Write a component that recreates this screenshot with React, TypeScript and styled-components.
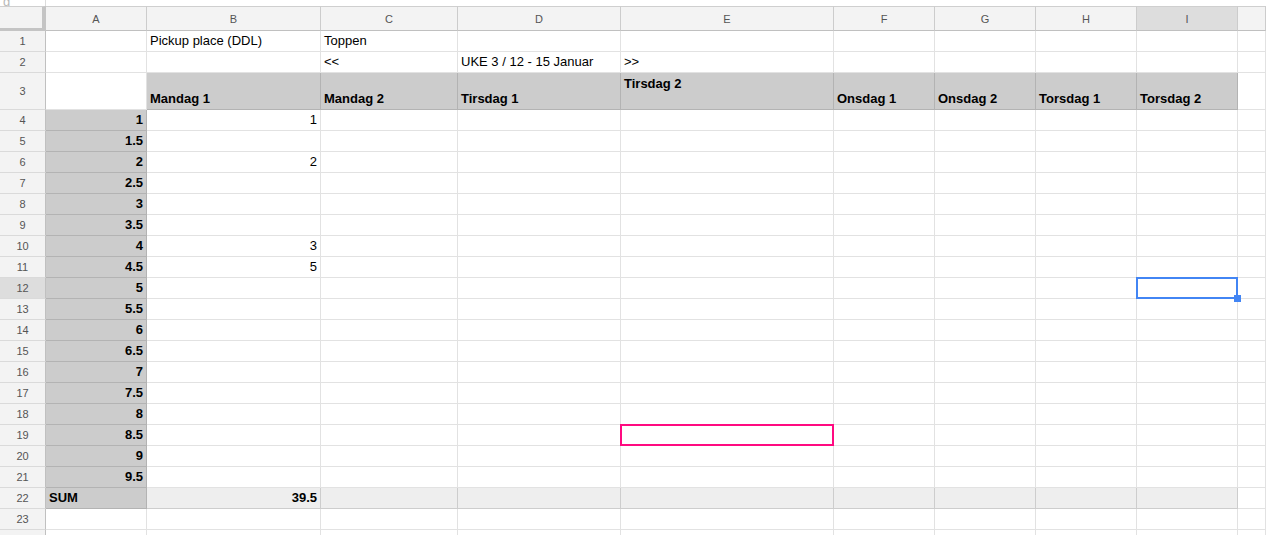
import React from "react";
import styled, { createGlobalStyle, css } from "styled-components";

const GlobalStyle = createGlobalStyle`
  html, body { margin: 0; padding: 0; background: #ffffff; }
  body { font-family: "Liberation Sans", Arial, sans-serif; overflow: hidden; }
`;

const COLS = ["A", "B", "C", "D", "E", "F", "G", "H", "I"];
const TEMPLATE = "46px 101px 174px 137px 163px 213px 101px 101px 101px 101px 1fr";

type Tone = "white" | "gray" | "light";
type Align = "left" | "right";
type VAlign = "top" | "bottom";

interface CellSpec {
  text?: string;
  tone?: Tone;
  align?: Align;
  bold?: boolean;
  valign?: VAlign;
  mark?: "select" | "pink";
}

const Sheet = styled.div`
  width: 1266px;
  height: 535px;
  overflow: hidden;
  display: flex;
  flex-direction: column;
`;

const FormulaStrip = styled.div`
  flex: none;
  height: 6px;
  display: grid;
  grid-template-columns: 46px 1fr;
  overflow: hidden;
`;

const StripLeft = styled.div`
  border-right: 1px solid #dcdcdc;
  box-sizing: border-box;
  display: flex;
  align-items: flex-end;
  padding-left: 3px;
  overflow: hidden;
  font-size: 13px;
  line-height: 9px;
  color: #b8b8b8;
`;

const Row = styled.div<{ $h: number }>`
  display: grid;
  grid-template-columns: ${TEMPLATE};
  height: ${(p) => p.$h}px;
  flex: none;
`;

const Corner = styled.div`
  background: #f3f3f3;
  border-top: 1px solid #cfcfcf;
  border-right: 4px solid #c4c4c4;
  border-bottom: 3px solid #c4c4c4;
  box-sizing: border-box;
`;

const ColHead = styled.div<{ $active?: boolean }>`
  background: ${(p) => (p.$active ? "#dddddd" : "#f3f3f3")};
  border-top: 1px solid #cfcfcf;
  border-right: 1px solid #cccccc;
  border-bottom: 1px solid #c0c0c0;
  box-sizing: border-box;
  display: flex;
  align-items: center;
  justify-content: center;
  font-size: 11px;
  color: #555555;
`;

const RowHead = styled.div<{ $active?: boolean }>`
  background: ${(p) => (p.$active ? "#dddddd" : "#f3f3f3")};
  border-right: 1px solid #c0c0c0;
  border-bottom: 1px solid #dadada;
  box-sizing: border-box;
  display: flex;
  align-items: center;
  justify-content: center;
  font-size: 11px;
  color: #555555;
`;

const toneBg: Record<Tone, string> = {
  white: "#ffffff",
  gray: "#cccccc",
  light: "#eeeeee",
};
const toneLine: Record<Tone, string> = {
  white: "#e2e2e2",
  gray: "#b3b3b3",
  light: "#cdcdcd",
};

const Cell = styled.div<{ $tone: Tone; $align: Align; $bold: boolean; $valign: VAlign }>`
  position: relative;
  box-sizing: border-box;
  background: ${(p) => toneBg[p.$tone]};
  border-right: 1px solid ${(p) => toneLine[p.$tone]};
  border-bottom: 1px solid ${(p) => toneLine[p.$tone]};
  display: flex;
  justify-content: ${(p) => (p.$align === "right" ? "flex-end" : "flex-start")};
  align-items: ${(p) => (p.$valign === "top" ? "flex-start" : "flex-end")};
  padding: ${(p) => (p.$valign === "top" ? "3px 3px 0 3px" : "0 3px 2px 3px")};
  font-size: 13px;
  line-height: 16px;
  font-weight: ${(p) => (p.$bold ? 700 : 400)};
  color: #000000;
  white-space: nowrap;
  overflow: visible;
`;

const markStyles = {
  select: css`
    border: 2px solid #4285f4;
  `,
  pink: css`
    border: 2px solid #ff0a80;
  `,
};

const Mark = styled.div<{ $kind: "select" | "pink" }>`
  position: absolute;
  z-index: 2;
  top: -1px;
  left: -1px;
  right: -1px;
  bottom: -1px;
  box-sizing: border-box;
  pointer-events: none;
  ${(p) => markStyles[p.$kind]}
`;

const Handle = styled.div`
  position: absolute;
  right: -5px;
  bottom: -5px;
  width: 7px;
  height: 7px;
  background: #4285f4;
`;

interface RowSpec {
  n: number;
  label: string;
  h: number;
  cells: Record<string, CellSpec>;
}

const halfSteps = ["1", "1.5", "2", "2.5", "3", "3.5", "4", "4.5", "5", "5.5", "6", "6.5", "7", "7.5", "8", "8.5", "9", "9.5"];
const bValues: Record<number, string> = { 4: "1", 6: "2", 10: "3", 11: "5" };

function buildRows(): RowSpec[] {
  const rows: RowSpec[] = [];
  rows.push({ n: 1, label: "1", h: 21, cells: { B: { text: "Pickup place (DDL)" }, C: { text: "Toppen" } } });
  rows.push({
    n: 2,
    label: "2",
    h: 21,
    cells: { C: { text: "<<" }, D: { text: "UKE 3 / 12 - 15 Januar" }, E: { text: ">>" } },
  });
  const heads = ["Mandag 1", "Mandag 2", "Tirsdag 1", "Tirsdag 2", "Onsdag 1", "Onsdag 2", "Torsdag 1", "Torsdag 2"];
  const r3: Record<string, CellSpec> = {};
  heads.forEach((t, i) => {
    r3[COLS[i + 1]] = { text: t, tone: "gray", bold: true, valign: t === "Tirsdag 2" ? "top" : "bottom" };
  });
  rows.push({ n: 3, label: "3", h: 37, cells: r3 });
  halfSteps.forEach((v, i) => {
    const n = i + 4;
    const cells: Record<string, CellSpec> = {
      A: { text: v, tone: "gray", bold: true, align: "right" },
    };
    if (bValues[n]) cells.B = { text: bValues[n], align: "right" };
    if (n === 12) cells.I = { mark: "select" };
    if (n === 19) cells.E = { mark: "pink" };
    rows.push({ n, label: String(n), h: 21, cells });
  });
  const r22: Record<string, CellSpec> = { A: { text: "SUM", tone: "gray", bold: true } };
  COLS.slice(1).forEach((c) => (r22[c] = { tone: "light" }));
  r22.B = { text: "39.5", tone: "light", bold: true, align: "right" };
  rows.push({ n: 22, label: "22", h: 21, cells: r22 });
  rows.push({ n: 23, label: "23", h: 21, cells: {} });
  rows.push({ n: 24, label: "", h: 21, cells: {} });
  return rows;
}

const ROWS = buildRows();

export default function App() {
  return (
    <>
      <GlobalStyle />
      <Sheet>
        <FormulaStrip>
          <StripLeft>g</StripLeft>
          <div />
        </FormulaStrip>
        <Row $h={25}>
          <Corner />
          {COLS.map((c) => (
            <ColHead key={c} $active={c === "I"}>
              {c}
            </ColHead>
          ))}
          <ColHead />
        </Row>
        {ROWS.map((r) => (
          <Row key={r.n} $h={r.h}>
            <RowHead $active={r.n === 12}>{r.label}</RowHead>
            {COLS.map((c) => {
              const s = r.cells[c] || {};
              return (
                <Cell
                  key={c}
                  $tone={s.tone || "white"}
                  $align={s.align || "left"}
                  $bold={!!s.bold}
                  $valign={s.valign || "bottom"}
                >
                  {s.text}
                  {s.mark && (
                    <Mark $kind={s.mark}>{s.mark === "select" && <Handle />}</Mark>
                  )}
                </Cell>
              );
            })}
            <Cell $tone="white" $align="left" $bold={false} $valign="bottom" />
          </Row>
        ))}
      </Sheet>
    </>
  );
}
